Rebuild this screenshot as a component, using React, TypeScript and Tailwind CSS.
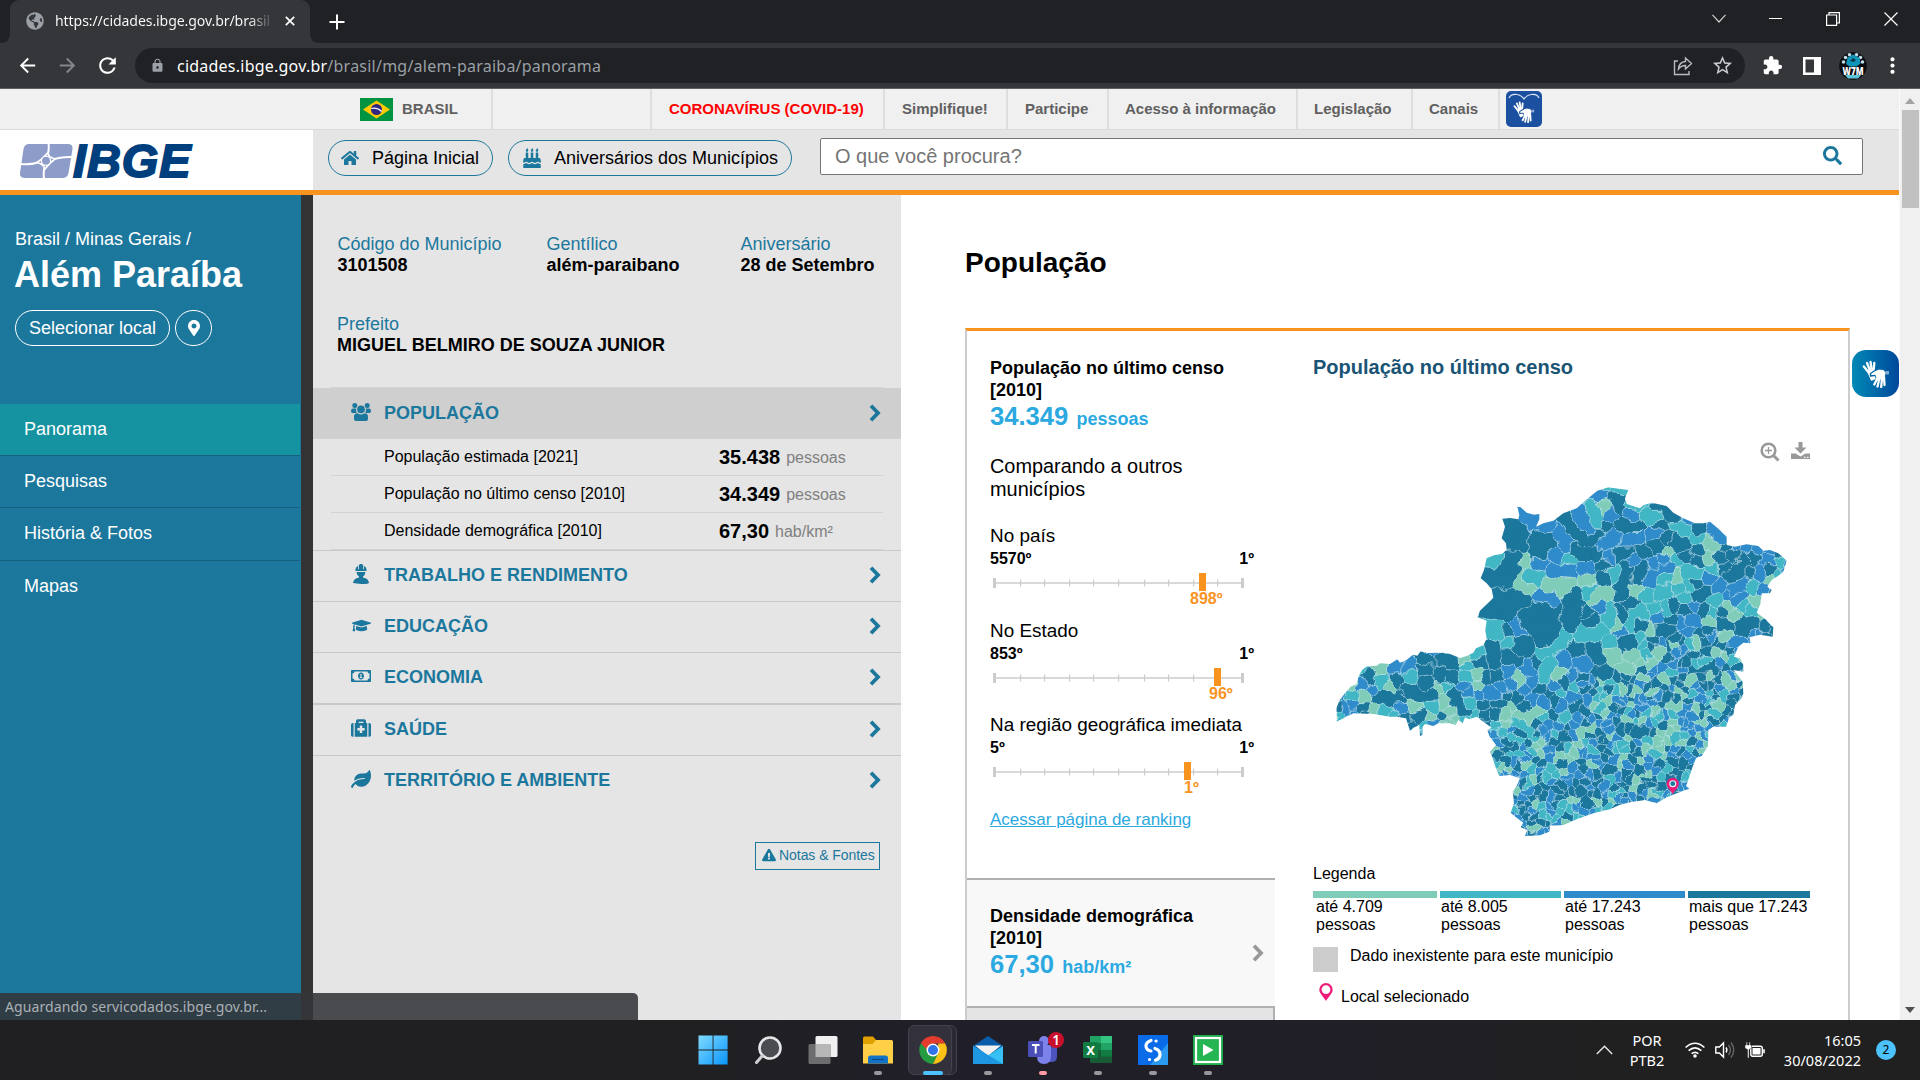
import React, { useMemo } from "react";
import {
  FaBirthdayCake,
  FaExclamationTriangle,
  FaGlobeAmericas,
  FaGraduationCap,
  FaHome,
  FaLeaf,
  FaMapMarkerAlt,
  FaRegMoneyBillAlt,
  FaMedkit,
  FaSearch,
} from "react-icons/fa";
import {
  MdArrowBack,
  MdArrowForward,
  MdExtension,
  MdLock,
  MdMoreVert,
  MdRefresh,
  MdStarBorder,
} from "react-icons/md";

/* ------------------------------------------------------------------ */
/* Choropleth map                                                      */
/* ------------------------------------------------------------------ */

type Pt = [number, number];
type Site = { x: number; y: number; g: number; c: string };

const FILLS: Record<string, string> = { D: "#1c779d", B: "#2f8bca", T: "#41b6c4", G: "#7fcdb9" };

const OUTLINE =
  "80,875 79,835 88,812 105,790 122,770 140,762 146,738 158,718 172,709 200,707 210,700 240,702 262,688 270,698 290,690 308,674 322,677 332,664 352,669 400,668 420,672 450,684 470,678 490,668 498,655 520,646 530,626 526,600 530,572 503,562 510,542 535,518 550,503 545,478 530,460 512,445 522,420 530,385 552,376 575,372 590,360 588,340 575,325 585,290 577,266 600,264 625,268 628,255 622,230 632,232 650,248 672,254 688,252 688,268 678,290 700,280 730,272 760,250 780,242 800,235 822,215 840,200 862,182 895,172 925,176 955,180 945,205 950,222 990,235 1000,226 1025,218 1070,228 1090,248 1120,265 1155,280 1180,280 1200,275 1225,296 1250,320 1250,345 1275,350 1310,343 1345,348 1360,362 1380,360 1405,370 1430,392 1420,425 1405,437 1385,450 1372,470 1385,480 1380,490 1355,490 1352,520 1340,548 1365,566 1390,592 1388,620 1350,614 1318,622 1322,640 1300,638 1285,650 1272,680 1290,685 1300,705 1300,725 1270,720 1285,738 1298,755 1300,790 1295,805 1275,825 1270,855 1258,862 1248,890 1210,890 1195,900 1194,948 1175,978 1158,985 1148,1010 1138,1040 1128,1068 1138,1076 1100,1090 1065,1105 1040,1120 1005,1110 960,1117 930,1124 900,1138 850,1150 800,1168 760,1185 720,1187 718,1205 690,1216 645,1218 652,1200 632,1192 640,1178 618,1162 602,1148 612,1120 608,1085 620,1068 630,1045 600,1035 568,1038 556,1010 548,985 540,965 558,945 538,918 532,900 545,893 520,875 500,860 478,868 465,862 458,880 445,870 437,885 420,880 385,880 370,888 345,882 338,890 338,915 330,918 328,885 310,893 300,904 288,865 260,860 240,860 190,852 130,850";

/* Larger municipalities: fill code followed by one or more centre points. */
const REGIONS =
  "B105,840;T125,795;G162,797;D175,740;G210,708;T215,755;D262,752;D210,802 240,803 268,805;D160,833;T218,842;B270,838;B255,707;B297,710;D340,722;D345,683;D400,685 430,695;D390,735 425,745;D300,780 330,795 365,795;G313,828;T367,832;G405,815;G366,860;D325,865;D400,860;G435,868;D435,790 440,820 460,845;B365,878;T475,710;G465,690;T505,665;D510,700;T465,740;G500,735;B478,785;G505,768;B505,795;T490,850;D525,855;D515,825;" +
  "D600,290 625,290 605,335 635,340;B645,262 672,275;B710,293;D680,330 715,335 685,370;D610,390 590,420 545,435 585,460 610,430;T550,390;G648,395;G630,445 655,470;T655,440 680,445;B690,405;B740,375;T778,387;B750,310 765,340;B730,425 780,425;G715,465 745,475 775,465;B690,490 720,505;D600,500 560,520 545,545 590,545 635,510 570,490;D700,545 660,545 740,545 650,580 730,590 690,600 700,630;D795,490 775,520 805,530 770,560 780,590;D840,575;D828,545;T545,590 565,600;B627,593;T597,640;D595,610;D640,640 655,665 625,660;T765,625 735,650 700,675;T720,695 705,720 700,750;D545,655 555,690;D600,685 625,695;D560,740;D680,700;B655,715;D800,655;D850,655 860,685;T815,612 850,615 880,600;B755,690;B815,705;D820,745 825,780;D860,735 885,735;G750,730;D760,760;B780,800;B535,785 560,795;B600,765;B650,775;D620,805;D570,825;" +
  "B800,250 820,270 835,295;B870,195;T925,183;D920,205 930,235;G878,230;T850,240 858,275;D775,265 795,300 820,325 855,325;B900,250;B960,250;D885,285;D950,290 985,290;B880,345 910,325;B955,330 985,325;D1040,228 1075,240 1095,258;T1010,255 1040,260;D1055,290;T1100,290 1125,300;D1170,292;B1210,300 1235,325;D1095,335 1120,345;T1157,328;G1200,345;G1197,385;D800,355 830,375 860,375;D930,375 955,372;D995,360;D1045,345;G1068,365;B1060,385;B830,415;D880,405;B970,385;D945,415 945,450 935,490;D995,415 985,445;B1065,415 1035,435 1015,455;T1100,395;T1125,430 1160,430;G1105,440;D1160,395;D1165,360;D1235,415;D1270,370;D1260,440 1290,425 1310,400;D1330,380;B1378,390;T1410,400;B1350,430;B1310,350;D885,450;G830,450;G895,485 855,500;T835,483;B870,530;T1010,495;T1050,495 1075,480;G980,485;D1165,500 1185,485;B1190,445;B1230,475;B1275,480 1300,465;G1340,510;T1300,530;T1325,470;D1180,545;D1120,540;T900,545 895,575;G915,585;T1000,548 970,555 968,590;B930,605;D940,645 970,630 990,590;G1020,605;B1045,560;D1050,605 1080,605;D1235,575 1260,590;D1295,585 1325,575 1300,600;D1365,585;B1265,645 1300,632;T905,637;G910,670;B1130,610;B1150,575;D1210,715 1180,720 1150,720;G1225,670;B1275,780;D1240,865;D1268,825;T1245,795;" +
  "G585,855;G625,860 655,858 685,842;T610,880 635,890 655,900;T580,905 605,920 635,935;D680,885;D610,955;D730,940 755,925 770,930;B720,885;D730,850;D565,975;D675,985;B720,960;D890,1020 910,1018;D995,1080;D830,1105 835,1125;D975,905 1000,905;G1085,830 1105,830;D1090,1065";

function spacing(x: number, y: number): number {
  if (y > 1030) return 17.5;
  if (y > 880) return 18.5;
  if (y > 740) return x > 820 ? 17.5 : 26;
  if (y > 620) return x > 980 ? 21 : 38;
  if (x > 1080) return 27;
  if (x > 860) return 31;
  return 62;
}

function buildSites(): Site[] {
  const sites: Site[] = [];
  let g = 0;
  for (const r of REGIONS.split(";")) {
    if (!r) continue;
    for (const p of r.slice(1).split(" ")) {
      const [x, y] = p.split(",").map(Number);
      sites.push({ x, y, g, c: r[0] });
    }
    g++;
  }
  const fixed = sites.length;
  let seed = 20117;
  const rnd = () => {
    seed = (seed * 1664525 + 1013904223) >>> 0;
    return seed / 4294967296;
  };
  for (let i = 0; i < 24000; i++) {
    const x = 60 + rnd() * 1390;
    const y = 150 + rnd() * 1090;
    const s = spacing(x, y) * (0.8 + rnd() * 0.55);
    let ok = true;
    for (let k = 0; k < sites.length; k++) {
      const d = Math.hypot(sites[k].x - x, sites[k].y - y);
      if (d < (k < fixed ? s * 1.15 : s)) {
        ok = false;
        break;
      }
    }
    if (!ok) continue;
    const q = rnd();
    const c = q < 0.33 ? "D" : q < 0.64 ? "B" : q < 0.84 ? "T" : "G";
    sites.push({ x, y, g: g++, c });
  }
  return sites;
}

function buildMap() {
  const sites = buildSites();
  const fills: Record<string, string> = { D: "", B: "", T: "", G: "" };
  let lines = "";
  sites.forEach((s, i) => {
    let poly: { p: Pt; o: number }[] = [
      { p: [s.x - 120, s.y - 120], o: -1 },
      { p: [s.x + 120, s.y - 120], o: -1 },
      { p: [s.x + 120, s.y + 120], o: -1 },
      { p: [s.x - 120, s.y + 120], o: -1 },
    ];
    sites.forEach((t, j) => {
      if (j === i || Math.abs(t.x - s.x) > 240 || Math.abs(t.y - s.y) > 240) return;
      const nx = t.x - s.x;
      const ny = t.y - s.y;
      const m = nx * (s.x + t.x) * 0.5 + ny * (s.y + t.y) * 0.5;
      const next: { p: Pt; o: number }[] = [];
      for (let k = 0; k < poly.length; k++) {
        const a = poly[k];
        const b = poly[(k + 1) % poly.length];
        const da = a.p[0] * nx + a.p[1] * ny - m;
        const db = b.p[0] * nx + b.p[1] * ny - m;
        const f = da / (da - db);
        const cut: Pt = [a.p[0] + (b.p[0] - a.p[0]) * f, a.p[1] + (b.p[1] - a.p[1]) * f];
        if (da <= 0) {
          next.push(a);
          if (db > 0) next.push({ p: cut, o: j });
        } else if (db <= 0) {
          next.push({ p: cut, o: a.o });
        }
      }
      poly = next;
    });
    if (poly.length < 3) return;
    fills[s.c] += "M" + poly.map((v) => v.p[0].toFixed(1) + " " + v.p[1].toFixed(1)).join("L") + "Z";
    poly.forEach((v, k) => {
      const n = poly[(k + 1) % poly.length];
      if (v.o > i && sites[v.o].g !== s.g) {
        lines += `M${v.p[0].toFixed(1)} ${v.p[1].toFixed(1)}L${n.p[0].toFixed(1)} ${n.p[1].toFixed(1)}`;
      }
    });
  });
  return { fills, lines };
}

function Pin({ className }: { className?: string }) {
  return (
    <svg viewBox="0 0 14 18" className={className}>
      <path
        fill="#ee1c78"
        fillRule="evenodd"
        d="M7 0a6.700 6.700 0 0 1 6.700 6.700C13.700 10 10.500 12.500 7 18 3.500 12.500.3 10 .3 6.700A6.700 6.700 0 0 1 7 0Zm0 2.200a4.400 4.400 0 1 0 0 8.800 4.400 4.400 0 0 0 0-8.800Z"
      />
    </svg>
  );
}

function StateMap() {
  const { fills, lines } = useMemo(buildMap, []);
  return (
    <svg viewBox="0 96 1560 1164" className="-ml-[3px] block h-[388px] w-[520px]">
      <defs>
        <clipPath id="state">
          <polygon points={OUTLINE} />
        </clipPath>
        <filter
          id="wobble"
          x="0"
          y="0"
          width="1560"
          height="1290"
          filterUnits="userSpaceOnUse"
          colorInterpolationFilters="sRGB"
        >
          <feTurbulence type="fractalNoise" baseFrequency="0.028" numOctaves="2" seed="4" />
          <feDisplacementMap in="SourceGraphic" scale="34" xChannelSelector="R" yChannelSelector="G" />
        </filter>
      </defs>
      <g clipPath="url(#state)">
        <g filter="url(#wobble)">
          {Object.keys(fills).map((k) => (
            <path key={k} d={fills[k]} fill={FILLS[k]} stroke={FILLS[k]} strokeWidth="1.5" />
          ))}
          <path d={lines} fill="none" stroke="#c4e4ec" strokeOpacity="0.85" strokeWidth="2.300" />
        </g>
      </g>
      <g transform="translate(1069 1043) scale(2.750)">
        <path
          fill="#ee1c78"
          d="M7 0a6.700 6.700 0 0 1 6.700 6.700C13.700 10 10.500 12.500 7 18 3.500 12.500.3 10 .3 6.700A6.700 6.700 0 0 1 7 0Z"
        />
        <circle cx="7" cy="6.600" r="3.900" fill="#e8f3f7" />
        <circle cx="7" cy="6.600" r="2.600" fill="#1c779d" />
      </g>
    </svg>
  );
}

/* ------------------------------------------------------------------ */
/* Small icons                                                         */
/* ------------------------------------------------------------------ */

function Chevron({ color }: { color: string }) {
  return (
    <svg viewBox="0 0 12 18" className="h-[18px] w-[12px] shrink-0">
      <path d="M2 1.800 9 9 2 16.200" fill="none" stroke={color} strokeWidth="3.800" />
    </svg>
  );
}

function HandsIcon({ className, gap }: { className: string; gap: string }) {
  return (
    <svg viewBox="0 0 28 28" className={className} fill="none" strokeLinecap="round" strokeLinejoin="round">
      <g stroke="#fff" strokeWidth="2.300">
        <path d="M7.500 13.500 1.800 6.500M8.500 12 5 3M10 11.500 8.500 1.800M11.500 12.500 12.300 3" />
      </g>
      <path d="M6.500 13 12 10.500l1 8-3.500 1.500Z" fill="#fff" stroke="#fff" strokeWidth="1.500" />
      <path d="M8.500 13.500 13 10.500l4-1.700 5 .7 2 3.200-1 6-8 1-1.500-4.500-5 .800Z" fill="#fff" stroke={gap} strokeWidth="1.400" />
      <path d="M9.500 14 13.500 11.300l4-1.500 4 .700 2 2.500-1.500 6-7 .500-1.500-4.500Z" fill="#fff" />
      <g stroke="#fff" strokeWidth="2.300">
        <path d="M15.500 18 12.300 24.500M17.500 18 15.500 26.500M20 18 19.200 27M22 17.500l.5 7.500" />
      </g>
      <path d="M23.500 11h3.500v3.500h-3.500Z" fill="#fff" fillOpacity=".5" />
    </svg>
  );
}

function PeopleIcon() {
  return (
    <svg viewBox="0 0 20 18" className="h-[18px] w-[20px]" fill="#1c779d">
      <circle cx="3.800" cy="2.500" r="2.500" />
      <circle cx="16.200" cy="2.500" r="2.500" />
      <circle cx="10" cy="6.400" r="3.800" />
      <path d="M0 7.500Q.3 5.600 2 5.600h3.200q-.5 2.400.6 4.400H1Q0 9.600 0 7.500ZM20 7.500q-.3-1.900-2-1.900h-3.200q.5 2.400-.6 4.400H19q1-.4 1-2.500ZM3 16v-2.500q.2-3.300 3.500-3.300Q10 12.600 13.500 10.200q3.300 0 3.500 3.300V16q0 2-2 2H5q-2 0-2-2Z" />
    </svg>
  );
}

function WorkerIcon() {
  return (
    <svg viewBox="0 0 16 20" className="h-[20px] w-[16px]" fill="#1c779d">
      <path d="M2.500 7V5.200Q2.800 3 5 2v3.200h.8V1l1.400-.9h1.600L10.200 1v4.200h.8V2q2.200 1 2.500 3.200V7ZM3.500 8h9q-.3 3.200-2.500 4.600v1q5.500 1 6 5.400-3.500 1.500-8 1T0 19q.500-4.400 6-5.400v-1Q3.800 11.200 3.500 8Z" />
    </svg>
  );
}

function ZoomInIcon() {
  return (
    <svg viewBox="0 0 20 20" className="size-5" fill="none" stroke="#999">
      <circle cx="8.500" cy="8.500" r="6.800" strokeWidth="2.600" />
      <path d="M13.500 13.500 18.500 18.500" strokeWidth="3" />
      <path d="M5 8.500h7M8.500 5v7" strokeWidth="1.300" />
    </svg>
  );
}

function DownloadIcon() {
  return (
    <svg viewBox="0 0 19 18" className="h-[18px] w-[19px]" fill="#999">
      <path d="M7.500 0h4v5.500h4L9.500 11.500l-6-6h4Z" />
      <path fillRule="evenodd" d="M0 11.500h4.500l5 3 5-3H19V17H0Zm13 3.200h1.500v1.300H13Zm3 0h1.500v1.300H16Z" />
    </svg>
  );
}

/* ------------------------------------------------------------------ */
/* Browser chrome                                                      */
/* ------------------------------------------------------------------ */

function TabStrip() {
  return (
    <div className="flex h-[43px] items-end bg-[#202124]">
      <svg viewBox="0 0 10 10" className="size-[10px]">
        <path d="M10 0v10H0Q10 10 10 0Z" fill="#35363a" />
      </svg>
      <div className="flex h-[43px] w-[300px] items-center rounded-t-[9px] bg-[#35363a] pb-[2px] pl-4">
        <FaGlobeAmericas className="size-[18px] shrink-0 text-[#9aa0a6]" />
        <div className="ml-[11px] w-[220px] overflow-hidden whitespace-nowrap bg-gradient-to-r from-white from-88% to-[#35363a] bg-clip-text text-[14.100px] tracking-[-0.100px] text-transparent">
          https://cidades.ibge.gov.br/brasil
        </div>
        <svg viewBox="0 0 10 10" className="ml-[10px] size-[10px]" stroke="#fff" strokeWidth="1.700">
          <path d="M.8.8 9.200 9.200M9.200.8.8 9.200" />
        </svg>
      </div>
      <svg viewBox="0 0 10 10" className="size-[10px]">
        <path d="M0 0v10h10Q0 10 0 0Z" fill="#35363a" />
      </svg>
      <div className="flex h-full flex-1 items-center">
        <svg viewBox="0 0 16 16" className="ml-[9px] size-4" stroke="#fff" strokeWidth="2">
          <path d="M8 .5v15M.5 8h15" />
        </svg>
        <div className="ml-auto flex items-center pr-[22px] pb-[6px]">
          <svg viewBox="0 0 14 9" className="h-[9px] w-[14px]" fill="none" stroke="#ccc" strokeWidth="1.200">
            <path d="M.5.8 7 8 13.500.8" />
          </svg>
          <div className="ml-[43px] h-px w-[13px] bg-white" />
          <svg viewBox="0 0 14 14" className="ml-[44px] size-[14px]" fill="none" stroke="#fff" strokeWidth="1.200">
            <path d="M.6 3h10v10.400H.6ZM3 3V.6h10.400V11h-2.800" />
          </svg>
          <svg viewBox="0 0 14 14" className="ml-[44px] size-[14px]" stroke="#fff" strokeWidth="1.200">
            <path d="M.5.5l13 13M13.500.5l-13 13" />
          </svg>
        </div>
      </div>
    </div>
  );
}

function Toolbar() {
  return (
    <div className="flex h-[46px] items-center border-b border-[#5f6064] bg-[#35363a] text-[#e8eaed]">
      <MdArrowBack className="ml-4 size-[23px] text-white" />
      <MdArrowForward className="ml-[17px] size-[23px] text-[#85868a]" />
      <MdRefresh className="ml-[16px] size-[25px] text-white" />
      <div className="ml-[15px] flex h-[35px] w-[1610px] items-center rounded-full bg-[#202124]">
        <MdLock className="ml-[15px] size-[15px] text-[#9aa0a6]" />
        <div className="ml-[12px] text-[16px] leading-5 tracking-[0.230px] text-[#9aa0a6]">
          <span className="text-white">cidades.ibge.gov.br</span>/brasil/mg/alem-paraiba/panorama
        </div>
        <svg viewBox="0 0 20 20" className="ml-auto size-5" fill="none" stroke="#b8bbbf" strokeWidth="1.400">
          <path d="M5 5H1.500v13.500H16V15M5.500 13q.5-7 7-7.500V2l6 5.500-6 5.500V9.500Q8 9.500 5.500 13Z" />
        </svg>
        <MdStarBorder className="mr-[11px] ml-[18px] size-[23px] text-[#c8cacd]" />
      </div>
      <MdExtension className="ml-[17px] size-[21px] text-white" />
      <svg viewBox="0 0 18 18" className="ml-[20px] size-[18px]">
        <path fill="#fff" fillRule="evenodd" d="M0 0h18v18H0Zm2.500 2.500v13H11v-13Z" />
      </svg>
      <svg viewBox="0 0 28 28" className="ml-[18px] size-[28px]">
        <circle cx="14" cy="14" r="13.800" fill="#0a0c10" />
        <g fill="#c3dbe4">
          <circle cx="4.500" cy="10" r="1.800" />
          <circle cx="6.500" cy="5.500" r="1.800" />
          <circle cx="10.500" cy="2.700" r="1.800" />
          <circle cx="17.500" cy="2.700" r="1.800" />
          <circle cx="21.500" cy="5.500" r="1.800" />
          <circle cx="23.500" cy="10" r="1.800" />
        </g>
        <path d="M7 12 8.500 5.500l5.500-3 6.500 3 1 6-4 3h-7Z" fill="#1294b8" />
        <path d="m11 9 3-3 3 2-2 2Z" fill="#0b3b55" />
        <path d="M6 23l3 3.500h10l3-3.500Z" fill="#5cc5d8" />
        <text x="14" y="22.500" textAnchor="middle" fontSize="11" fontWeight="900" fill="#fff" textLength="21" lengthAdjust="spacingAndGlyphs">
          W7M
        </text>
      </svg>
      <MdMoreVert className="ml-[13px] size-[25px] text-white" />
    </div>
  );
}

/* ------------------------------------------------------------------ */
/* Site header                                                         */
/* ------------------------------------------------------------------ */

function GovBar() {
  return (
    <div className="flex h-[41px] items-stretch border-b border-[#dcdcdc] bg-[#f0f0f0] text-[15px] font-bold text-[#606060]">
      <div className="flex w-[493px] items-center border-r-2 border-[#dedede] pl-[360px]">
        <svg viewBox="0 0 33 23" className="h-[23px] w-[33px]">
          <rect width="33" height="23" fill="#009440" />
          <path d="M16.500 2.500 30 11.500l-13.500 9-13.500-9Z" fill="#ffcb00" />
          <circle cx="16.500" cy="11.500" r="5.500" fill="#302681" />
          <path d="M11.200 10.500q6-1.500 10.500 3" fill="none" stroke="#fff" strokeWidth="1.200" />
        </svg>
        <span className="ml-[9px]">BRASIL</span>
      </div>
      <div className="w-[159px] border-r-2 border-[#dedede]" />
      <div className="flex w-[233px] items-center border-r-2 border-[#dedede] pl-[17px] text-[#f00]">
        CORONAVÍRUS (COVID-19)
      </div>
      <div className="flex w-[123px] items-center border-r-2 border-[#dedede] pl-[17px]">Simplifique!</div>
      <div className="flex w-[101px] items-center border-r-2 border-[#dedede] pl-[17px]">Participe</div>
      <div className="flex w-[189px] items-center border-r-2 border-[#dedede] pl-[16px]">Acesso à informação</div>
      <div className="flex w-[115px] items-center border-r-2 border-[#dedede] pl-[16px]">Legislação</div>
      <div className="flex w-[87px] items-center border-r-2 border-[#dedede] pl-[16px]">Canais</div>
      <div className="mt-[2px] ml-[6px] flex size-9 flex-col items-center rounded-[5px] bg-[#1b4f9f]">
        <svg viewBox="0 0 36 10" className="h-[10px] w-9" fill="none" stroke="#dfe8f5" strokeWidth="1.200">
          <path d="M3 7Q5 2.500 11 3.500q4 .5 7 4.500 3-4 7-4.500 6-1 8 3.500" />
        </svg>
        <HandsIcon className="h-[22px] w-[22px]" gap="#1b4f9f" />
      </div>
    </div>
  );
}

function SiteHeader() {
  return (
    <div className="flex h-[65px] border-b-[5px] border-[#f8931f] bg-[#e5e5e5]">
      <div className="flex w-[313px] bg-white pt-[14px] pl-5">
        <svg viewBox="0 0 53 34" className="h-[34px] w-[53px]">
          <path d="M9 0h39q5 0 4.500 5l-4 24q-1 5-6 5H5q-5.500 0-5-5L3.500 5Q4.500 0 9 0Z" fill="#8d9cc9" />
          <g fill="none" stroke="#fff" strokeWidth="2">
            <path d="M28.500 -1Q29.500 7 27 13M53 13Q41 12.500 31 16M24 35Q23 27 25 21M1 20Q12 21 21 17.500" />
          </g>
          <path
            d="M27.500 9Q29 13.500 35 15Q30 18.500 25 25Q23.500 20 17 18.500Q22.500 15 27.500 9Z"
            fill="#8d9cc9"
            stroke="#fff"
            strokeWidth="1.600"
          />
          <circle cx="26" cy="16.800" r="4.600" fill="#8d9cc9" stroke="#fff" strokeWidth="1.300" />
        </svg>
        <span className="-mt-px text-[47px] leading-[35px] font-bold tracking-[0.900px] text-[#003f7d] italic [-webkit-text-stroke:1.800px_#003f7d]">
          IBGE
        </span>
      </div>
      <div className="flex flex-1 items-start pt-[8px] pl-[15px] text-[18px]">
        <div className="mt-[2px] flex h-9 w-[165px] items-center rounded-full border border-[#1c779d] pl-[12px]">
          <FaHome className="mb-px size-[18px] text-[#1c779d]" />
          <span className="ml-[13px]">Página Inicial</span>
        </div>
        <div className="mt-[2px] ml-[15px] flex h-9 w-[284px] items-center rounded-full border border-[#1c779d] pl-[13px]">
          <FaBirthdayCake className="mb-px h-[20px] w-[20px] text-[#1c779d]" />
          <span className="ml-[12px]">Aniversários dos Municípios</span>
        </div>
        <div className="ml-[28px] flex h-[37px] w-[1043px] items-center rounded-[2px] border border-[#767676] bg-white pr-[20px] pb-[2px] pl-[14px] text-[20px] text-[#757575]">
          O que você procura?
          <FaSearch className="ml-auto size-[19px] text-[#1c779d]" />
        </div>
      </div>
    </div>
  );
}

/* ------------------------------------------------------------------ */
/* Left navigation                                                     */
/* ------------------------------------------------------------------ */

function Sidebar() {
  return (
    <div className="flex w-[313px] flex-col border-r-[12px] border-[#333] bg-[#1c779d] text-[18px] text-white">
      <div className="mt-[34px] pl-[15px] leading-5">Brasil / Minas Gerais /</div>
      <div className="mt-[6px] pl-[14px] text-[36px] leading-10 font-bold">Além Paraíba</div>
      <div className="mt-[15px] flex gap-[5px] pl-[15px]">
        <div className="flex h-9 w-[155px] items-center justify-center rounded-full border border-white">
          Selecionar local
        </div>
        <div className="flex h-9 w-[37px] items-center justify-center rounded-full border border-white">
          <FaMapMarkerAlt className="size-4" />
        </div>
      </div>
      <div className="mt-[58px] w-[300px]">
        <div className="flex h-[52px] items-center border-b border-[#17607f] bg-[#1593a0] pb-px pl-6">Panorama</div>
        <div className="flex h-[52px] items-center border-b border-[#17607f] pb-px pl-6">Pesquisas</div>
        <div className="flex h-[53px] items-center border-b border-[#17607f] pb-px pl-6">História &amp; Fotos</div>
        <div className="flex h-[52px] items-center pb-[2px] pl-6">Mapas</div>
      </div>
    </div>
  );
}

/* ------------------------------------------------------------------ */
/* Middle column                                                       */
/* ------------------------------------------------------------------ */

function Fact({ label, value, className }: { label: string; value: string; className?: string }) {
  return (
    <div className={className}>
      <div className="text-[#1c779d]">{label}</div>
      <div className="font-bold whitespace-nowrap">{value}</div>
    </div>
  );
}

function Row({ label, value, unit }: { label: string; value: string; unit: string }) {
  return (
    <div className="mx-[18px] flex h-[37px] items-center border-b border-[#d3d3d3] pl-[53px] text-[16px]">
      <span className="w-[335px] leading-5">{label}</span>
      <span className="pb-px text-[20px] leading-5 font-bold">{value}</span>
      <span className="ml-[6px] pt-[2px] leading-5 text-[#808080]">{unit}</span>
    </div>
  );
}

function Section({ icon, title, thick, active }: { icon: React.ReactNode; title: string; thick?: boolean; active?: boolean }) {
  const tone = active
    ? "h-[51px] bg-[#cfcfcf]"
    : thick
      ? "h-[52px] border-t-2 border-[#c9c9c9] pb-px"
      : "h-[51px] border-t border-[#c9c9c9] pb-px";
  return (
    <div className={`flex items-center pr-[20px] pl-[37px] text-[18px] font-bold text-[#1c779d] ${tone}`}>
      <span className="flex w-[22px] justify-center pb-[3px]">{icon}</span>
      <span className="ml-[12px]">{title}</span>
      <span className="ml-auto pb-[2px]">
        <Chevron color="#1c779d" />
      </span>
    </div>
  );
}

function Summary() {
  return (
    <div className="w-[588px] bg-[#e5e5e5] pt-[39px] text-[18px] leading-[21px]">
      <div className="flex pl-[24.500px]">
        <Fact className="w-[209px]" label="Código do Município" value="3101508" />
        <Fact className="w-[194px]" label="Gentílico" value="além-paraibano" />
        <Fact label="Aniversário" value="28 de Setembro" />
      </div>
      <Fact className="mt-[38px] pl-[24px]" label="Prefeito" value="MIGUEL BELMIRO DE SOUZA JUNIOR" />
      <div className="mx-[18px] mt-[31px] h-px bg-[#d3d3d3]" />
      <Section active icon={<PeopleIcon />} title="POPULAÇÃO" />
      <Row label="População estimada [2021]" value="35.438" unit="pessoas" />
      <Row label="População no último censo [2010]" value="34.349" unit="pessoas" />
      <Row label="Densidade demográfica [2010]" value="67,30" unit="hab/km²" />
      <Section icon={<WorkerIcon />} title="TRABALHO E RENDIMENTO" />
      <Section icon={<FaGraduationCap className="size-[19px]" />} title="EDUCAÇÃO" />
      <Section icon={<FaRegMoneyBillAlt className="size-[20px]" />} title="ECONOMIA" />
      <Section thick icon={<FaMedkit className="size-[20px]" />} title="SAÚDE" />
      <Section icon={<FaLeaf className="size-[20px]" />} title="TERRITÓRIO E AMBIENTE" />
      <div className="mt-[36px] flex justify-end pr-[21px]">
        <div className="flex h-[28px] w-[125px] items-center border border-[#1c779d] pb-[2px] pl-[6px] text-[14px] text-[#1c779d]">
          <FaExclamationTriangle className="size-[14px]" />
          <span className="ml-[3px] tracking-[-0.050px] whitespace-nowrap">Notas &amp; Fontes</span>
        </div>
      </div>
    </div>
  );
}

/* ------------------------------------------------------------------ */
/* Right card                                                          */
/* ------------------------------------------------------------------ */

const TICKS = [30, 54, 79, 103, 128, 154, 178, 203, 227];

function Ranking({ title, from, value, marker, labelAt }: { title: string; from: string; value: string; marker: number; labelAt: number }) {
  return (
    <div className="relative h-[94.500px]">
      <div className="text-[18.900px] leading-[22px] whitespace-nowrap">{title}</div>
      <div className="mt-[2px] flex w-[264px] justify-between text-[16px] leading-5 font-bold">
        <span>{from}</span>
        <span>1º</span>
      </div>
      <svg viewBox="0 0 264 22" className="block h-[22px] w-[264px]">
        <rect x="4" y="13" width="249" height="2" fill="#d9d9d9" />
        {TICKS.map((t) => (
          <rect key={t} x={t} y="10.500" width="1.200" height="7" fill="#ccc" />
        ))}
        <rect x="3" y="9" width="3" height="10" fill="#ccc" />
        <rect x="251" y="9" width="3" height="10" fill="#ccc" />
        <rect x={marker} y="4" width="7" height="18" fill="#f8931f" />
      </svg>
      <span className="absolute top-[64px] text-[16px] leading-5 font-bold text-[#f8931f]" style={{ left: labelAt }}>
        {value}
      </span>
    </div>
  );
}

function IndicatorTitle({ title, value, unit }: { title: string; value: string; unit: string }) {
  return (
    <div>
      <div className="text-[18px] leading-[22px] font-bold">
        {title}
        <br />
        [2010]
      </div>
      <div className="text-[25.600px] leading-[31px] font-bold text-[#2ba9e0]">
        {value} <span className="ml-px text-[18px] leading-none">{unit}</span>
      </div>
    </div>
  );
}

const LEGEND = [
  { bar: "h-[7px] w-[124px] bg-[#7fcdb9]", text: "até 4.709", cell: "w-[127px]", pad: "pl-[3px]" },
  { bar: "h-[7px] w-[121px] bg-[#41b6c4]", text: "até 8.005", cell: "w-[124px]", pad: "pl-px" },
  { bar: "h-[7px] w-[121px] bg-[#2f8bca]", text: "até 17.243", cell: "w-[124px]", pad: "pl-px" },
  { bar: "h-[7px] w-[122px] bg-[#1c779d]", text: "mais que 17.243", cell: "w-[124px]", pad: "pl-px" },
];

function Content() {
  return (
    <div className="flex-1 overflow-hidden bg-white pl-[64px]">
      <h1 className="mt-[52px] text-[28px] leading-8 font-bold">População</h1>
      <div className="mt-[49px] flex h-[760px] w-[885px] border-x-2 border-t-[3px] border-x-[#ccc] border-t-[#f8931f]">
        <div className="w-[308px]">
          <div className="h-[547px] pt-[26px] pl-[23px]">
            <IndicatorTitle title="População no último censo" value="34.349" unit="pessoas" />
            <div className="mt-[23px] text-[19.900px] leading-[23px]">
              Comparando a outros
              <br />
              municípios
            </div>
            <div className="mt-[24px]">
              <Ranking title="No país" from="5570º" value="898º" marker={209} labelAt={200} />
              <Ranking title="No Estado" from="853º" value="96º" marker={224} labelAt={219} />
              <Ranking title="Na região geográfica imediata" from="5º" value="1º" marker={194} labelAt={194} />
            </div>
            <div className="mt-px text-[17px] leading-5 text-[#2ba9e0] underline">Acessar página de ranking</div>
          </div>
          <div className="flex h-[128px] items-start justify-between border-t-2 border-[#b0b0b0] bg-[#f8f8f8] pt-[25px] pr-[11px] pl-[23px]">
            <IndicatorTitle title="Densidade demográfica" value="67,30" unit="hab/km²" />
            <div className="pt-[39px]">
              <Chevron color="#999" />
            </div>
          </div>
          <div className="h-[40px] border-t-2 border-r-2 border-[#b0b0b0] bg-[#e4e4e4]" />
        </div>
        <div className="flex-1 pt-[24px] pl-[38px]">
          <div className="text-[20px] leading-6 font-bold text-[#1a5475]">População no último censo</div>
          <div className="mt-[63px] flex h-5 w-[497px] items-start justify-end gap-[11px]">
            <ZoomInIcon />
            <DownloadIcon />
          </div>
          <StateMap />
          <div className="mt-[14px] text-[16px] leading-5">Legenda</div>
          <div className="mt-[7px] flex">
            {LEGEND.map((l) => (
              <div key={l.text} className={l.cell}>
                <div className={l.bar} />
                <div className={`text-[16px] leading-[18px] ${l.pad}`}>
                  {l.text}
                  <br />
                  pessoas
                </div>
              </div>
            ))}
          </div>
          <div className="mt-[13px] flex items-start text-[16px] leading-5">
            <div className="size-[25px] bg-[#ccc]" />
            <span className="-mt-px ml-[12px]">Dado inexistente para este município</span>
          </div>
          <div className="mt-[11px] flex items-start pl-[6px] text-[16px] leading-5">
            <Pin className="h-[18px] w-[14px]" />
            <span className="mt-[4px] ml-[8px]">Local selecionado</span>
          </div>
        </div>
      </div>
    </div>
  );
}

/* ------------------------------------------------------------------ */
/* Taskbar                                                             */
/* ------------------------------------------------------------------ */

function TaskItem({ children, dot }: { children: React.ReactNode; dot?: string }) {
  return (
    <div className="flex h-[60px] w-[55px] flex-col items-center pt-[15px]">
      <div className="flex h-[30px] items-center justify-center">{children}</div>
      {dot && <div className={`mt-[6px] h-1 rounded-full ${dot}`} />}
    </div>
  );
}

function Taskbar() {
  const gray = "w-2 bg-[#98989c]";
  return (
    <div className="flex h-[60px] bg-[linear-gradient(90deg,#202022_0%,#202022_35%,#201f29_50%,#201f27_70%,#202020_85%)] text-white">
      <div className="flex w-[1236px] pl-[685px]">
        <TaskItem>
          <svg viewBox="0 0 30 30" className="size-[30px]">
            <defs>
              <linearGradient id="win" x1="0" y1="0" x2="1" y2="1">
                <stop offset="0" stopColor="#7fdcff" />
                <stop offset="1" stopColor="#0a94fb" />
              </linearGradient>
            </defs>
            <path fill="url(#win)" d="M.5.500h14.100v14.100H.5Zm15 0h14.100v14.100H15.500ZM.5 15.500h14.100v14.100H.5Zm15 0h14.100v14.100H15.500Z" />
          </svg>
        </TaskItem>
        <TaskItem>
          <svg viewBox="0 0 30 30" className="size-[30px]">
            <circle cx="17" cy="13" r="10.500" fill="#4b4b52" stroke="#e4e6e8" strokeWidth="2.600" />
            <path d="m9.500 20.500-6 7" stroke="#cdd0d3" strokeWidth="3" strokeLinecap="round" />
          </svg>
        </TaskItem>
        <TaskItem>
          <svg viewBox="0 0 30 30" className="size-[30px]">
            <rect x="7.500" y="1" width="22" height="21" rx="1.500" fill="#f0f0f0" />
            <rect x=".5" y="9" width="22" height="20" rx="1.500" fill="#6d6d6f" />
            <path d="M7.500 9h15v13h-15Z" fill="#b7b7b7" />
          </svg>
        </TaskItem>
        <TaskItem dot={gray}>
          <svg viewBox="0 0 30 30" className="size-[30px]">
            <path d="M0 3q0-1.500 1.500-1.500H10L13 5v6H0Z" fill="#e0a000" />
            <path d="M0 9h9.500L13 5h15.500Q30 5 30 6.500v22H0Z" fill="#ffcf48" />
            <path d="M5 28.500V23q0-2.500 2.500-2.500h15Q25 20.500 25 23v5.500Z" fill="#1273c6" />
            <path d="M9 24.500h12" stroke="#0a4a8a" strokeWidth="1.200" />
          </svg>
        </TaskItem>
        <div className="relative flex h-[60px] w-[55px] flex-col items-center pt-[15px]">
          <div className="absolute top-[5px] left-[8px] h-[50px] w-[44px] rounded-[6px] border border-[#43424c] bg-[#2b2a34]" />
          <div className="absolute top-[5px] left-[3px] h-[50px] w-[44px] rounded-[6px] border border-[#43424c] bg-[#33323c]" />
          <svg viewBox="0 0 30 30" className="relative size-[30px]">
            <path d="M15 15 3 8.200A13.900 13.900 0 0 1 27.100 8.200L15 8.500Z" fill="#e33b2e" />
            <path d="M3 8.200A13.900 13.900 0 0 0 15 28.900L20.600 18.500 15 15Z" fill="#249a41" />
            <path d="M27.100 8.200A13.900 13.900 0 0 1 15 28.900L20.900 17 20 8.400Z" fill="#fbc116" />
            <path d="M3 8.200A13.900 13.900 0 0 1 27.100 8.200H15L9 15Z" fill="#e33b2e" />
            <circle cx="15" cy="15" r="6.500" fill="#fff" />
            <circle cx="15" cy="15" r="5" fill="#2f74e8" />
          </svg>
          <div className="relative mt-[6px] h-1 w-5 rounded-full bg-[#4cc2ff]" />
        </div>
        <TaskItem dot={gray}>
          <svg viewBox="0 0 30 30" className="size-[30px]">
            <path d="M0 11 15 1l15 10v6H0Z" fill="#0a5ca8" />
            <path d="M2 10.500h26L15 21Z" fill="#f2f2f2" />
            <path d="M0 11v18h30V11L15 20.500Z" fill="#36c0f4" />
            <path d="m0 11 30 18H1.500Q0 29 0 27.500Z" fill="#1f96e0" />
          </svg>
        </TaskItem>
        <TaskItem dot="w-2 bg-[#ff99a4]">
          <svg viewBox="0 0 36 34" className="-mt-[3px] ml-[6px] h-[34px] w-[36px]">
            <circle cx="16" cy="9" r="5" fill="#7b83eb" />
            <path d="M19 15h10v9q0 6-5 6h-5Z" fill="#4b53bc" />
            <path d="M9 13h14v11q0 8-7 8t-7-8Z" fill="#7b83eb" />
            <rect x="0" y="9" width="15" height="16" rx="1.300" fill="#4b50b8" />
            <path d="M4 13h7.500M7.700 13v8.500" stroke="#fff" strokeWidth="1.900" />
            <circle cx="28" cy="8" r="8" fill="#c8102e" />
            <text x="28" y="13" textAnchor="middle" fontSize="13.500" fontWeight="600" fill="#fff">
              1
            </text>
          </svg>
        </TaskItem>
        <TaskItem dot={gray}>
          <svg viewBox="0 0 30 30" className="size-[30px]">
            <rect x="7" y="1" width="22" height="27" rx="1.300" fill="#185c37" />
            <path d="M7 1h11v7H7Z" fill="#21a366" />
            <path d="M18 1h11v7H18Z" fill="#33c481" />
            <path d="M7 8h11v7H7Z" fill="#107c41" />
            <path d="M18 8h11v7H18Z" fill="#21a366" />
            <path d="M18 15h11v6.500H18Z" fill="#107c41" />
            <rect x="0" y="7" width="15" height="16" rx="1.300" fill="#107c41" />
            <text x="7.500" y="19.500" textAnchor="middle" fontSize="13" fontWeight="700" fill="#fff">
              X
            </text>
          </svg>
        </TaskItem>
        <TaskItem dot={gray}>
          <svg viewBox="0 0 30 30" className="size-[30px]">
            <rect width="30" height="30" fill="#0a6be8" />
            <path d="M12 30 30 8v22Z" fill="#2a9af0" />
            <g fill="none" stroke="#fff" strokeWidth="3.200" strokeLinecap="round">
              <path d="M13 5.500q-5 1.500-5 5.500t5 5M17 13.500q5 1.500 5 6t-4.500 5.500" />
              <path d="M18 6h.1M11.500 24.500h.1" />
            </g>
          </svg>
        </TaskItem>
        <TaskItem dot={gray}>
          <svg viewBox="0 0 30 30" className="size-[30px]">
            <rect width="30" height="30" fill="#1fae4b" />
            <rect x="3" y="3" width="24" height="24" fill="#25b552" stroke="#fff" strokeWidth="2.200" />
            <path d="M10 9v12l10.500-6Z" fill="#fff" />
          </svg>
        </TaskItem>
      </div>
      <div className="flex flex-1 items-center justify-end pr-6 text-[14.500px] leading-5">
        <svg viewBox="0 0 17 10" className="h-[10px] w-[17px]" fill="none" stroke="#e8e8e8" strokeWidth="1.400">
          <path d="M.8 9 8.500 1.200 16.200 9" />
        </svg>
        <div className="ml-[16px] w-[36px] text-center">
          POR
          <br />
          PTB2
        </div>
        <svg viewBox="0 0 20 16" className="ml-[20px] h-4 w-5" fill="none" stroke="#fff" strokeWidth="1.600">
          <path d="M.6 5.500q9.400-8.500 18.800 0M3.600 8.700q6.400-5.500 12.800 0M6.600 11.700q3.400-2.700 6.800 0" />
          <circle cx="10" cy="14" r="1" fill="#fff" />
        </svg>
        <svg viewBox="0 0 20 18" className="ml-[10px] h-[18px] w-5" fill="none" stroke="#fff" strokeWidth="1.400">
          <path d="M.8 6h3.500L8.500 2v14L4.300 12H.8Z" />
          <path d="M11 6.500q1.800 2.500 0 5" />
          <path d="M13.500 4q3.800 5 0 10M16 1.500q5.500 7.500 0 15" stroke="#666" />
        </svg>
        <svg viewBox="0 0 20 17" className="ml-[10px] h-[17px] w-5">
          <rect x="5.800" y="4.200" width="11.500" height="10" rx="2" fill="none" stroke="#fff" strokeWidth="1.400" />
          <rect x="7.500" y="6" width="8" height="6.500" fill="#fff" />
          <path d="M18.200 7.200h1.600v4h-1.600Z" fill="#fff" />
          <path d="M0 3h1.200V0h1.200v3h1.600V0h1.200v3h1.300v3.200L4 7.500V16H2.500V7.500L0 6.200Z" fill="#fff" stroke="#202020" strokeWidth=".5" />
        </svg>
        <div className="ml-[14px] w-[82px] text-right">
          16:05
          <br />
          30/08/2022
        </div>
        <div className="ml-[15px] flex size-5 items-center justify-center rounded-full bg-[#4cc2ff] text-[12px] text-black">2</div>
      </div>
    </div>
  );
}

/* ------------------------------------------------------------------ */

export default function App() {
  return (
    <div className="relative flex h-[1080px] w-[1920px] flex-col overflow-hidden font-['Noto_Sans',sans-serif]">
      <TabStrip />
      <Toolbar />
      <div className="flex h-[931px] font-['Liberation_Sans',Arial,sans-serif] text-black">
        <div className="relative flex w-[1899px] flex-col">
          <GovBar />
          <SiteHeader />
          <div className="flex h-[825px]">
            <Sidebar />
            <Summary />
            <Content />
          </div>
          <div className="absolute top-[261px] right-0 flex size-[47px] items-center justify-center rounded-[14px] bg-gradient-to-r from-[#0489b5] to-[#02479a]">
            <HandsIcon className="size-[28px]" gap="#0267a6" />
          </div>
          <div className="absolute bottom-0 left-0 flex h-[27px] w-[638px] items-center rounded-tr-[5px] bg-[rgba(52,53,57,0.880)] pl-[5px] font-['Noto_Sans',sans-serif] text-[14px] tracking-[0.090px] text-[#aab0b5]">
            Aguardando servicodados.ibge.gov.br...
          </div>
        </div>
        <div className="flex w-[21px] flex-col items-center border-l border-[#fafafa] bg-[#f0f0f0]">
          <svg viewBox="0 0 10 6" className="mt-[9px] h-[6px] w-[10px]" fill="#a3a3a3">
            <path d="M0 6 5 0l5 6Z" />
          </svg>
          <div className="mt-[6px] h-[98px] w-[17px] bg-[#c1c1c1]" />
          <svg viewBox="0 0 10 6" className="mt-auto mb-[7px] h-[6px] w-[10px]" fill="#505050">
            <path d="M0 0l5 6 5-6Z" />
          </svg>
        </div>
      </div>
      <Taskbar />
    </div>
  );
}
